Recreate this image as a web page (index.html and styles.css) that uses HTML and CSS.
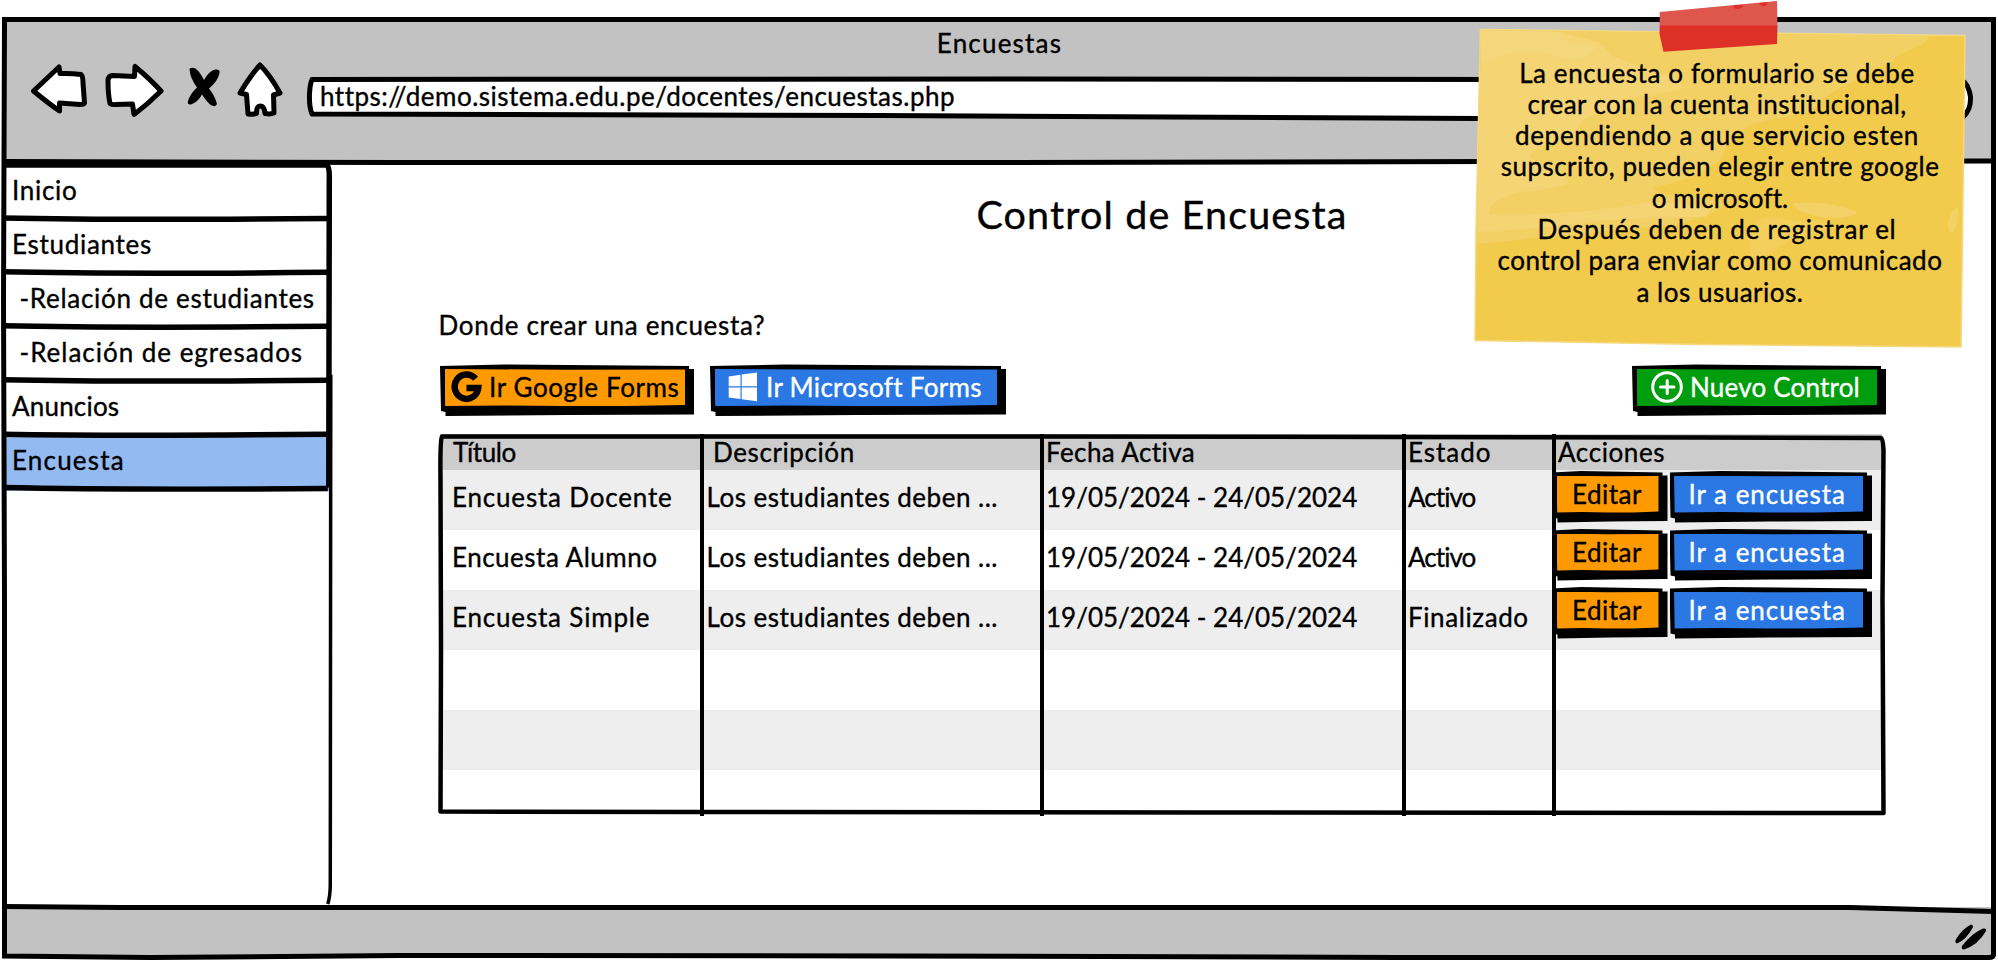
FILE: index.html
```
<!DOCTYPE html>
<html lang="es">
<head>
<meta charset="utf-8">
<title>Encuestas</title>
<link rel="stylesheet" href="styles.css">
</head>
<body>
<div class="window">
  <header class="chrome">
    <div class="window-title t12">Encuestas</div>
    <div class="toolbar">
      <svg class="icon back" viewBox="30 60 58 62"><path class="key" d="M33.500 91 L59 67 L60 73.500 Q71 73 81 74.500 Q83 76 83 83 L84.500 103 Q84 104.500 80 104.500 L59.500 103 L59.500 111 Q48 103 33.500 91Z"/></svg>
      <svg class="icon forward" viewBox="104 60 60 62"><path class="key" d="M161 91 Q150 79 135 66.500 L134.500 76.500 L113 75.500 Q108 75.500 108 81 Q108 94 110 103.500 Q112 105 116 104.500 L132.500 104 L134 114.500 Q148 104 161 91Z"/></svg>
      <svg class="icon stop" viewBox="186 60 36 62"><path d="M189.500 69 Q191 67 195.500 68.500 Q200 72 204 80 Q209 71 215 69.500 Q220.500 69 219.500 73 Q218 81 209 88.500 Q215 96 217 104 Q215.500 108 210 104.500 Q206 101 202 94.500 Q198 102 191 104.500 Q187 105 188 101 Q190 94 197 87.500 Q190 78 189.500 69Z"/></svg>
      <svg class="icon home" viewBox="236 60 48 62"><path class="key" d="M260 65 Q270 75 280 93 L273.500 95 L274 113 Q270 114.500 265 113.500 Q264.500 106 260 106 Q256.500 106 256.500 113.500 Q252 114.500 248 114 L246.500 94.500 L240 93 Q250 76 260 65Z"/></svg>
      <div class="address">
        <svg class="outline" viewBox="306 74 1668 48"><path class="field" d="M312 79.500 L1000 79 L1962 80 Q1969 85 1970.500 97 Q1971 110 1963 117 L1480 118.500 L880 115.500 L312 114 Q309 107 309.500 94 Q310 84 312 79.500Z"/></svg>
        <span class="url t5">https://demo.sistema.edu.pe/docentes/encuestas.php</span>
      </div>
    </div>
  </header>

  <div class="body">
    <nav class="sidebar">
      <a class="item t7">Inicio</a>
      <a class="item t7">Estudiantes</a>
      <a class="item sub t7">-Relación de estudiantes</a>
      <a class="item sub t10">-Relación de egresados</a>
      <a class="item t2">Anuncios</a>
      <a class="item selected t12">Encuesta</a>
      <svg class="outline" viewBox="0 162 336 746">
        <g class="lines">
          <path d="M4 165 H327 Q330 166 329.500 180 L329 488"/>
          <path d="M2 218 Q120 220.500 328 218.500"/>
          <path d="M2 272 Q120 274.500 328 272.500"/>
          <path d="M2 326 Q120 328.500 328 326.500"/>
          <path d="M2 380 Q120 382.500 328 380.500"/>
          <path d="M2 434.500 Q120 436.500 328 434.500"/>
          <path d="M2 488 Q120 490.500 328 489"/>
        </g>
        <path class="tail" d="M331 375 L330.500 885 Q330.500 897 328 905"/>
      </svg>
    </nav>

    <main class="content">
      <h1 class="heading">Control de Encuesta</h1>
      <p class="question t7">Donde crear una encuesta?</p>
      <div class="actions">
        <button class="btn orange google">
          <svg class="btn-icon g" viewBox="449 374 32 32"><path class="gmark" d="M474.500 381.800 A11.800 12.200 0 1 0 477.200 391 H465.500"/></svg>
          <span class="t6">Ir Google Forms</span>
        </button>
        <button class="btn blue microsoft">
          <svg class="btn-icon" viewBox="728 375 30 30"><path d="M728.700 379.500 L740.500 377.800 V389.200 H728.700Z M741.700 377.600 L757 375.500 V389.200 H741.700Z M728.700 390.600 H740.500 V402 L728.700 400.400Z M741.700 390.600 H757 V404.300 L741.700 402.200Z"/></svg>
          <span class="t3">Ir Microsoft Forms</span>
        </button>
        <button class="btn green create">
          <svg class="btn-icon plus" viewBox="1651 374 32 32"><circle cx="1667" cy="390" r="14.300"/><path d="M1660.500 390 H1674 M1667.200 383.500 V396.500"/></svg>
          <span class="t2">Nuevo Control</span>
        </button>
      </div>

      <div class="table">
        <div class="col c-title">
          <div class="th t-4">Título</div>
          <div class="td t8">Encuesta Docente</div>
          <div class="td t5">Encuesta Alumno</div>
          <div class="td t8">Encuesta Simple</div>
        </div>
        <div class="col c-desc">
          <div class="th t6">Descripción</div>
          <div class="td t5">Los estudiantes deben ...</div>
          <div class="td t5">Los estudiantes deben ...</div>
          <div class="td t5">Los estudiantes deben ...</div>
        </div>
        <div class="col c-date">
          <div class="th t4">Fecha Activa</div>
          <div class="td">19/05/2024 - 24/05/2024</div>
          <div class="td">19/05/2024 - 24/05/2024</div>
          <div class="td">19/05/2024 - 24/05/2024</div>
        </div>
        <div class="col c-state">
          <div class="th t10">Estado</div>
          <div class="td t-9">Activo</div>
          <div class="td t-9">Activo</div>
          <div class="td t6">Finalizado</div>
        </div>
        <div class="col c-actions">
          <div class="th t6">Acciones</div>
          <div class="row-actions"><button class="btn orange edit t5">Editar</button><button class="btn blue go t10">Ir a encuesta</button></div>
          <div class="row-actions"><button class="btn orange edit t5">Editar</button><button class="btn blue go t10">Ir a encuesta</button></div>
          <div class="row-actions"><button class="btn orange edit t5">Editar</button><button class="btn blue go t10">Ir a encuesta</button></div>
        </div>
        <svg class="outline" viewBox="438 434 1448 382">
          <path class="frame" d="M442 436.500 L1040 436.500 L1700 437.500 L1881 438 Q1883 439 1883.500 450 L1882.500 600 L1883.500 813 L1200 812.500 L700 812 L440.500 811.500 L441 650 L440.500 480 Q440 440 442 436.500Z"/>
          <path class="rule" d="M702 434 V816 M1042 434 V816 M1404 434 V816 M1554 434 V816"/>
        </svg>
      </div>
    </main>
  </div>

  <footer class="status">
    <svg class="grip" viewBox="1950 920 42 34"><path d="M1955.500 940 Q1962 929 1971 924.500 Q1974 925 1972.500 928 Q1966 940 1957 943.500 Q1955 943 1955.500 940Z M1962 946 Q1972 933 1983 928.500 Q1987 928 1986 931 Q1978 945 1964 949.500 Q1961 949.500 1962 946Z"/></svg>
  </footer>

  <svg class="window-frame" viewBox="0 0 1998 962">
    <path d="M4.500 19.500 H1993.500 L1993.500 955 Q1993 957.500 1989 957.500 L1400 957.500 L900 956 L400 955.500 L150 957.500 L4.500 956 L4.500 600 L3.500 300 Z"/>
    <path d="M4 161.500 L400 162.500 L1000 162.500 L1500 161.500 L1993 161"/>
    <path d="M4 906.500 L120 907.500 L1700 907.500 L1850 907.500 L1993 911.500"/>
  </svg>

  <aside class="note">
    <svg class="paper" viewBox="1470 0 500 352">
      <path fill="#f2ca4c" stroke="#f5d980" stroke-width="1.500" d="M1480.500 29.500 L1965 35.500 L1963 200 L1961 347 L1700 344.500 L1475 340.500 L1476 230Z"/>
      <path fill="#f2d064" d="M1481 30 L1929 36 Q1928 43 1910 50 Q1896 55 1893 62 Q1880 66 1860 79 Q1826 92 1810 112 Q1780 118 1752 124 Q1730 136 1720 160 Q1695 180 1655 187 Q1650 194 1700 198 Q1735 203 1717 210 Q1700 220 1670 225 L1477 244Z"/>
      <path fill="#f4d678" opacity=".75" d="M1481 30 L1545 31 Q1572 34 1598 42 Q1612 54 1612 56 Q1630 62 1648 70 Q1690 80 1680 90 L1630 98 Q1640 110 1600 113 Q1578 118 1578 132 Q1580 144 1552 142 Q1528 152 1530 158 Q1570 176 1568 184 Q1550 190 1520 192 Q1488 200 1489 214 Q1580 216 1650 202 Q1725 205 1705 217 Q1620 216 1540 228 L1477 232Z"/>
      <path fill="#f5d983" opacity=".5" d="M1481 64 Q1510 48 1550 54 Q1580 66 1595 50 Q1600 42 1568 43 Q1562 36 1565 32 L1481 30Z"/>
      <path fill="#f4d166" d="M1793 203 Q1830 200 1858 212 Q1850 220 1820 217 Q1795 212 1793 203Z M1958 207 Q1958 232 1951 233 Q1946 230 1949 219 Q1953 208 1958 207Z"/>
      <path fill="#f3ce5a" d="M1750 254 Q1746 220 1770 217 L1796 221 Q1840 220 1826 230 Q1790 238 1776 250 Q1755 262 1750 254Z"/>
      <path fill="#df564c" d="M1659.700 12 L1777 1 L1777.500 26 L1659.700 26Z"/>
      <path fill="#dd3127" d="M1659.700 25.500 H1777.500 L1777 44 L1663.500 51.700 L1659.500 34Z M1733 5.500 L1743 4.800 Q1743 8.500 1738 9 Q1734 9 1733 5.500Z M1759 3 L1768 2.200 Q1767 6 1763 6 Q1760 6 1759 3Z"/>
    </svg>
    <div class="note-text">
      <span class="wrap t6">La encuesta o formulario se debe</span>
      <span class="wrap t4">crear con la cuenta institucional,</span>
      <span class="wrap t7">dependiendo a que servicio esten</span>
      <span class="t5">supscrito, pueden elegir entre google</span>
      <span class="t1">o microsoft.</span>
      <span class="wrap t7">Después deben de registrar el</span>
      <span class="t5">control para enviar como comunicado</span>
      <span class="t5">a los usuarios.</span>
    </div>
  </aside>
</div>
</body>
</html>
```
FILE: styles.css
```
* { box-sizing: border-box; }

body {
  margin: 0;
  background: #fff;
  color: #000;
  font: 26px/32px Lato, "Open Sans", sans-serif;
  -webkit-text-stroke: .35px currentColor;
  font-kerning: normal;
}

h1, p { margin: 0; font-weight: 400; }
svg { display: block; }

/* tracking steps */
.t-9 { letter-spacing: -.95px; }
.t-4 { letter-spacing: -.42px; }
.t1 { letter-spacing: .1px; }
.t2 { letter-spacing: .2px; }
.t3 { letter-spacing: .31px; }
.t4 { letter-spacing: .4px; }
.t5 { letter-spacing: .5px; }
.t6 { letter-spacing: .6px; }
.t7 { letter-spacing: .7px; }
.t8 { letter-spacing: .82px; }
.t10 { letter-spacing: .98px; }
.t12 { letter-spacing: 1.2px; }

.window {
  position: relative;
  width: 1998px;
  height: 962px;
  overflow: hidden;
  display: grid;
  grid-template-rows: 162px 745px 55px;
}

.window-frame {
  position: absolute;
  inset: 0;
  width: 1998px;
  height: 962px;
  fill: none;
  stroke: #000;
  stroke-width: 5px;
}

.outline { position: absolute; inset: 0; width: 100%; height: 100%; }

/* title bar and toolbar */
.chrome { margin: 19px 4px 0; background: #c2c2c2; padding-top: 8px; }
.window-title { text-align: center; padding-left: 1px; }
.toolbar { display: flex; padding: 1px 0 0 26px; }
.icon { height: 62px; flex: none; }
.key { fill: #fff; stroke: #000; stroke-width: 5px; stroke-linejoin: round; }
.back { width: 58px; }
.forward { width: 60px; margin-left: 16px; }
.stop { width: 36px; margin-left: 22px; }
.home { width: 48px; margin-left: 14px; }
.address {
  position: relative;
  flex: none;
  width: 1668px;
  height: 48px;
  margin: 14px 0 0 22px;
  padding: 6px 0 0 14px;
}
.field { fill: #fff; stroke: #000; stroke-width: 5px; stroke-linejoin: round; }
.url { position: relative; }

.body { display: grid; grid-template-columns: 336px 1fr; }

/* side menu */
.sidebar { position: relative; padding-top: 4px; }
.item { display: block; height: 54.1px; padding-left: 12px; line-height: 48px; white-space: pre; }
.sub { padding-left: 19.500px; }
.selected { margin: 0 6px 0 4px; padding-left: 8px; background: #94baf2; }
.lines { fill: none; stroke: #000; stroke-width: 5.500px; }
.tail { fill: none; stroke: #000; stroke-width: 3.500px; }

/* page content */
.content { width: 1448px; margin-left: 102px; padding-top: 27px; }
.heading { font-size: 39.500px; line-height: 50px; letter-spacing: 1.130px; text-align: center; }
.question { margin-top: 69.500px; padding-left: .5px; }
.actions { display: flex; margin-top: 23.500px; height: 52px; padding-left: 2px; }

/* sketchy buttons: black silhouette with a drop edge, coloured face on top */
.btn {
  position: relative;
  isolation: isolate;
  display: flex;
  align-items: center;
  border: 0;
  padding: 0;
  background: #000;
  color: #000;
  font: inherit;
  -webkit-text-stroke: inherit;
  line-height: 32px;
  white-space: nowrap;
  clip-path: polygon(0 2px, 25% .5px, calc(100% - 5px) 2px, calc(100% - 5px) 5px, 100% 5px, 100% calc(100% - 1.500px), 50% calc(100% - 1px), 5.500px 100%, 5.500px calc(100% - 4px), 1px calc(100% - 5px));
}
.btn::before {
  content: "";
  position: absolute;
  z-index: -1;
  inset: 5px 9px 10px 4.500px;
  background: var(--face);
  clip-path: polygon(0 0, 50% .7px, 100% .5px, 100% calc(100% - 1px), 75% 100%, 50% 100%, 25% calc(100% - .5px), .7px 100%);
}
.orange { --face: #ff9900; }
.blue { --face: #2b78e4; color: #fff; }
.green { --face: #009e0f; color: #fff; }

.google { width: 254px; padding: 0 0 6px 10px; }
.google span { margin-left: 7px; }
.microsoft { width: 296px; margin-left: 16px; padding: 0 0 6px 18px; }
.microsoft span { margin-left: 8px; }
.create { width: 254px; margin-left: auto; padding: 0 0 6px 19px; }
.create span { margin-left: 7px; }
.btn-icon { width: 30px; height: 30px; fill: currentColor; }
.g, .plus { width: 32px; height: 32px; fill: none; }
.gmark { fill: none; stroke: #000; stroke-width: 6.500px; }
.plus { stroke: #fff; stroke-width: 3px; stroke-linecap: round; }

/* table */
.table {
  position: relative;
  display: grid;
  grid-template-columns: 264px 340px 362px 150px 332px;
  height: 382px;
  margin-top: 17.500px;
  background:
    linear-gradient(#ccc 36px, #eee 36px 96px, #fff 96px 156px, #eee 156px 216px, #fff 216px 276px, #eee 276px 336px, #fff 336px)
    2px 0 / 1442px 100% no-repeat;
}
.th { height: 36px; padding-top: 2px; white-space: nowrap; }
.td { height: 60px; line-height: 54px; white-space: nowrap; }
.c-title { padding-left: 14px; }
.c-title .th { padding-left: 1px; }
.c-desc { padding-left: 4.500px; }
.c-desc .th { padding-left: 6.500px; }
.c-date { padding-left: 4px; }
.c-state { padding-left: 4px; }
.c-actions { position: relative; z-index: 1; padding-left: 0; }
.c-actions .th { padding-left: 4px; }
.row-actions { display: flex; height: 58px; padding: 1px 0 0; margin-left: -2px; }
.row-actions .btn { height: 52px; padding-bottom: 6px; }
.row-actions .edit { width: 115.500px; padding-left: 20px; }
.row-actions .go { width: 202.500px; margin-left: 2px; padding-left: 19px; }
.frame { fill: none; stroke: #000; stroke-width: 4.500px; stroke-linejoin: round; }
.rule { fill: none; stroke: #000; stroke-width: 4px; }

/* status bar */
.status { margin: 0 4px 5px; background: #c2c2c2; display: flex; justify-content: flex-end; padding: 13px 2px 0 0; }
.grip { width: 42px; height: 34px; }

/* sticky note pinned over the window */
.note { position: absolute; left: 1470px; top: 0; width: 500px; height: 352px; }
.paper { position: absolute; inset: 0; width: 500px; height: 352px; }
.note-text {
  position: relative;
  display: flex;
  flex-direction: column;
  padding-top: 57.500px;
  line-height: 31.300px;
  text-align: center;
  white-space: nowrap;
}
.wrap { padding-right: 6px; }
```
